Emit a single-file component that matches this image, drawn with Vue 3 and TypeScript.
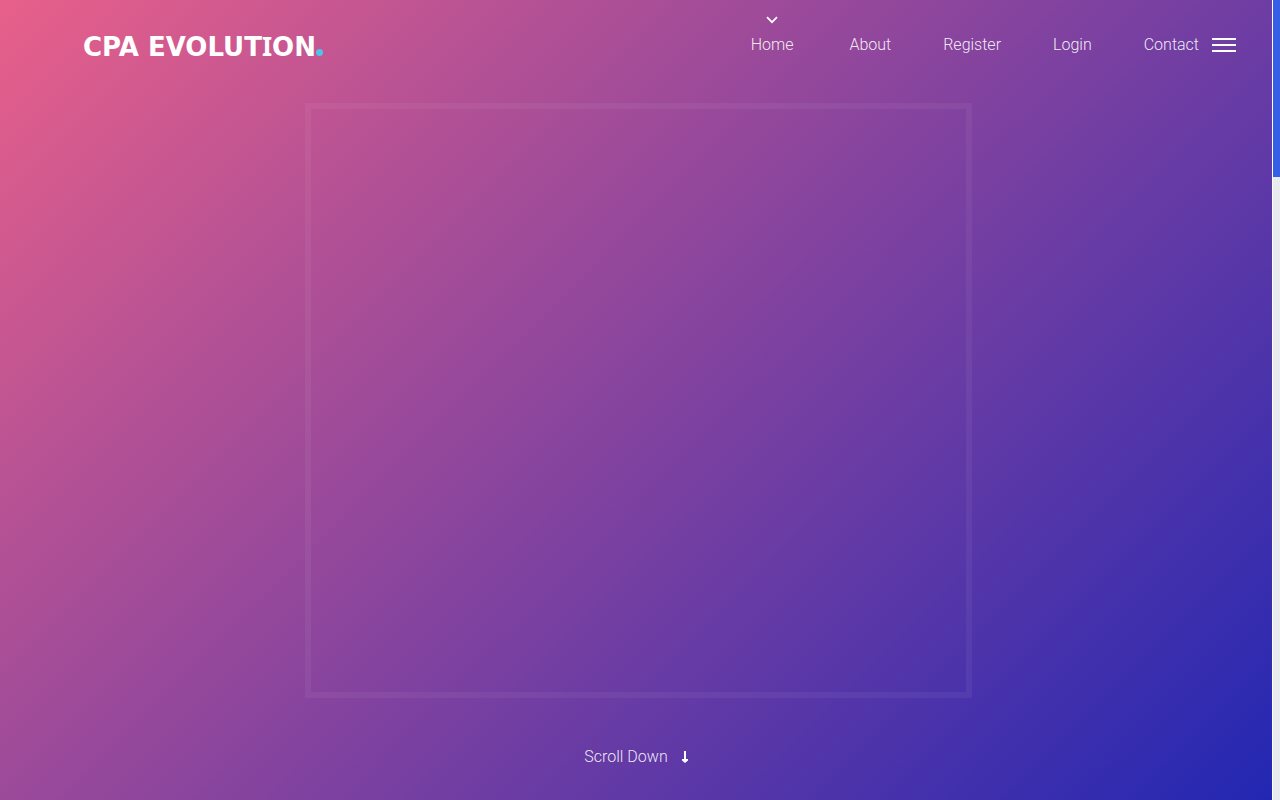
<script setup lang="ts">
import { ref } from 'vue'

interface NavItem {
  label: string
  href: string
}

const items: NavItem[] = [
  { label: 'Home', href: '#home' },
  { label: 'About', href: '#about' },
  { label: 'Register', href: '#register' },
  { label: 'Login', href: '#login' },
  { label: 'Contact', href: '#contact' },
]

const active = ref('Home')
</script>

<template>
  <div class="page">
    <div class="hero">
      <header class="header">
        <a class="logo" href="#home"><span>CPA EVOLUT<span class="slab">I</span>ON</span><span class="dot" aria-hidden="true"></span></a>
        <nav class="nav" aria-label="Main">
          <a
            v-for="item in items"
            :key="item.label"
            class="link"
            :class="{ active: item.label === active }"
            :href="item.href"
            @click="active = item.label"
          >
            <svg v-if="item.label === active" class="chevron" viewBox="0 0 12 8" aria-hidden="true">
              <path d="M1 1.2 L6 6.2 L11 1.2" fill="none" stroke="#fff" stroke-width="1.7" />
            </svg>
            {{ item.label }}
          </a>
        </nav>
        <button class="menu" type="button" aria-label="Open menu">
          <span></span><span></span><span></span>
        </button>
      </header>
      <main class="main">
        <div class="frame"></div>
      </main>
      <a class="scroll" href="#about">
        Scroll Down
        <svg class="arrow" viewBox="0 0 6 12" aria-hidden="true">
          <path d="M2 0 H4 V8 H6 V9.5 L3 12 L0 9.5 V8 H2 Z" fill="#fff" />
        </svg>
      </a>
    </div>
    <div class="track" aria-hidden="true"><div class="thumb"></div></div>
  </div>
</template>

<style>
body {
  margin: 0;
}
</style>

<style scoped>
.page {
  display: flex;
  height: 100vh;
  font-family: Roboto, "Liberation Sans", sans-serif;
  font-size: 16px;
  font-weight: 300;
  line-height: 24px;
}
.hero {
  flex: 1;
  display: flex;
  flex-direction: column;
  background: linear-gradient(135deg, #e8608a, #2227b3);
}
.header {
  display: flex;
  align-items: center;
  height: 90px;
  padding: 0 36px 0 83px;
}
.logo {
  display: flex;
  align-items: baseline;
  margin-right: auto;
  padding-top: 2px;
  color: #fff;
  font-family: Verdana, "DejaVu Sans", sans-serif;
  font-size: 26px;
  font-weight: 700;
  line-height: 40px;
  text-decoration: none;
}
.slab {
  font-family: "Noto Sans", sans-serif;
}
.dot {
  width: 7px;
  height: 7px;
  border-radius: 50%;
  background: #4fc3e8;
}
.nav {
  display: flex;
  gap: 52px;
}
.link {
  position: relative;
  color: rgba(255, 255, 255, 0.9);
  text-decoration: none;
}
.active {
  padding: 0 4px;
}
.chevron {
  position: absolute;
  top: -17px;
  left: 50%;
  width: 12px;
  height: 8px;
  margin-left: -6px;
}
.menu {
  display: flex;
  flex-direction: column;
  gap: 4px;
  width: 24px;
  margin-left: 13px;
  padding: 0;
  border: 0;
  background: none;
}
.menu span {
  height: 2px;
  background: #fff;
}
.main {
  flex: 1;
  display: flex;
  padding: 13px 300px 0 305px;
}
.frame {
  flex: 1;
  border: 6px solid rgba(255, 255, 255, 0.05);
}
.scroll {
  display: flex;
  align-items: center;
  align-self: center;
  gap: 14px;
  padding: 47px 0 31px;
  color: rgba(255, 255, 255, 0.9);
  text-decoration: none;
}
.arrow {
  width: 6px;
  height: 12px;
}
.track {
  width: 7px;
  border-left: 1px solid #fff;
  background: #e9ecef;
}
.thumb {
  height: 177px;
  background: #365fe8;
}
</style>
